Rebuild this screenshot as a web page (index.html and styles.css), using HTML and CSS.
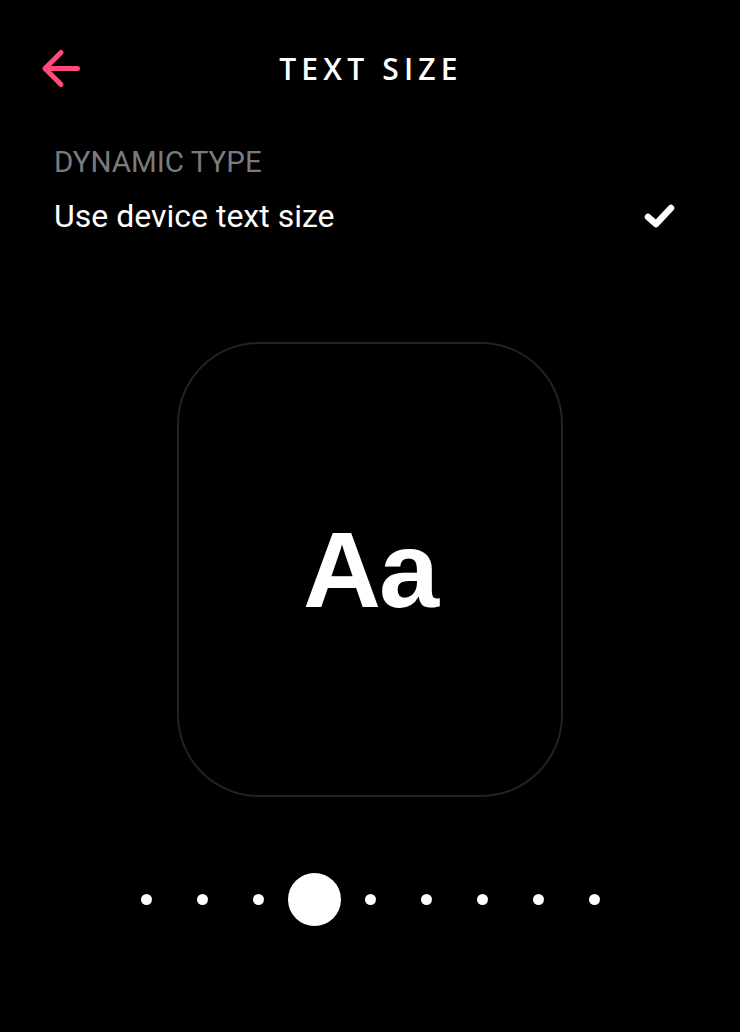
FILE: index.html
```html
<!DOCTYPE html>
<html lang="en">
<head>
    <meta charset="UTF-8">
    <meta name="viewport" content="width=device-width, initial-scale=1.0">
    <title>Text Size</title>
    <link rel="stylesheet" href="styles.css">
</head>
<body>
    <div class="header">
        <a class="back" href="#">
            <svg width="44" height="44" viewBox="0 0 44 44">
                <path d="M5 22.5 H37.5 M21 6.5 L5 22.5 L21 38.5" fill="none" stroke="#ff4a7a" stroke-width="5" stroke-linecap="round" stroke-linejoin="round"/>
            </svg>
        </a>
        <h1>Text Size</h1>
    </div>

    <div class="section">
        <div class="section-title">Dynamic Type</div>
        <div class="option">
            <span>Use device text size</span>
            <svg class="check" width="36" height="28" viewBox="0 0 36 28">
                <path d="M6 15 L14 22 L29 6" fill="none" stroke="#fff" stroke-width="6.5" stroke-linecap="round" stroke-linejoin="round"/>
            </svg>
        </div>
    </div>

    <div class="preview">
        <div class="preview-card">Aa</div>
    </div>

    <div class="slider">
        <span class="dot"></span>
        <span class="dot"></span>
        <span class="dot"></span>
        <span class="dot active"></span>
        <span class="dot"></span>
        <span class="dot"></span>
        <span class="dot"></span>
        <span class="dot"></span>
        <span class="dot"></span>
    </div>
</body>
</html>
```

FILE: styles.css
```css
body {
    font-family: 'Roboto', 'Liberation Sans', sans-serif;
    background-color: #000;
    margin: 0;
    padding: 0;
    color: #fff;
    width: 740px;
    height: 1032px;
}
.header {
    position: relative;
    height: 138px;
    display: flex;
    align-items: center;
    justify-content: center;
}
.header h1 {
    margin: 0;
    font-family: 'Open Sans', sans-serif;
    font-size: 30px;
    font-weight: 600;
    letter-spacing: 5.2px;
    text-transform: uppercase;
    padding-left: 2px;
    margin-top: -2px;
}
.back {
    position: absolute;
    left: 40px;
    top: 46px;
    display: block;
    width: 44px;
    height: 44px;
}
.section {
    padding: 6px 62px 0 54px;
}
.section-title {
    color: #7b7b7b;
    font-size: 29.5px;
    text-transform: uppercase;
    line-height: 36px;
}
.option {
    display: flex;
    justify-content: space-between;
    align-items: center;
    font-size: 32px;
    line-height: 36px;
    margin-top: 18px;
}
.preview {
    display: flex;
    justify-content: center;
    margin-top: 108px;
}
.preview-card {
    width: 382px;
    height: 451px;
    border: 2px solid #222;
    border-radius: 82px;
    display: flex;
    align-items: center;
    justify-content: center;
    font-family: 'Liberation Sans', Arial, sans-serif;
    font-weight: bold;
    font-size: 108px;
    letter-spacing: -2px;
}
.slider {
    display: flex;
    justify-content: center;
    align-items: center;
    height: 54px;
    margin-top: 75px;
}
.dot {
    width: 11px;
    height: 11px;
    margin: 0 22.5px;
    border-radius: 50%;
    background-color: #fff;
}
.dot.active {
    width: 53px;
    height: 53px;
    margin: 0 1.5px;
}
```
